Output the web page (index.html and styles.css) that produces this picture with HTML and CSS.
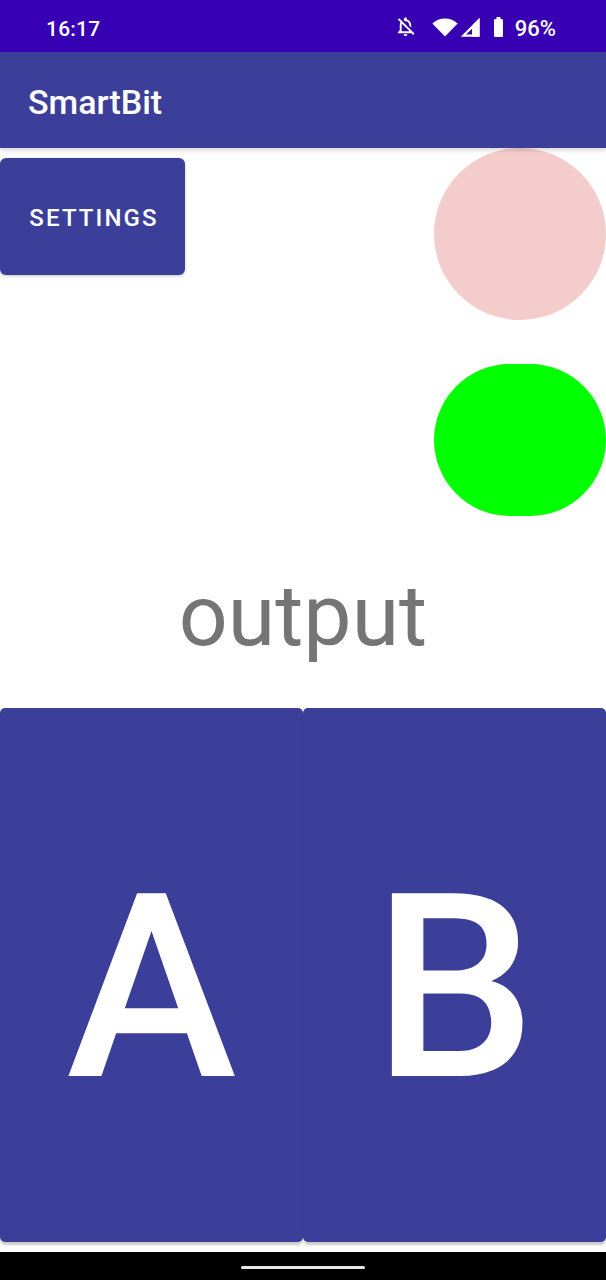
FILE: index.html
```html
<!DOCTYPE html>
<html>
<head>
<meta charset="utf-8">
<link rel="stylesheet" href="styles.css">
</head>
<body>
<div class="screen">
  <div class="status">
    <span class="time">16:17</span>
    <div class="status-icons">
      <svg class="ic-bell" width="23" height="23" viewBox="0 0 24 24"><path fill="#fff" d="M12 22c1.1 0 2-.9 2-2h-4c0 1.1.9 2 2 2zm0-15.5c2.49 0 4 2.02 4 4.5v.1l2 2V11c0-3.070-1.64-5.64-4.5-6.32V4c0-.83-.67-1.5-1.5-1.5s-1.5.67-1.5 1.5v.68c-.24.06-.47.15-.69.23l1.64 1.64c.18-.02.36-.05.55-.05zM5.41 3.35L4 4.76l2.81 2.81C6.29 8.57 6 9.73 6 11v5l-2 2v1h14.24l1.74 1.74 1.41-1.41L5.41 3.35zM16 17H8v-6c0-.68.12-1.32.34-1.9L16 16.76V17z"/></svg>
      <svg class="ic-wifi" width="26" height="19" viewBox="0 0 26 19"><path fill="#fff" d="M13 18.5L0.3 5.6C3.7 2.3 8.2 0.4 13 0.4s9.3 1.9 12.7 5.2z"/></svg>
      <svg class="ic-signal" width="20" height="19" viewBox="0 0 20 19"><path fill="none" stroke="#fff" stroke-width="2.2" stroke-linejoin="miter" d="M18.5 2.6V17.7H3.3z"/><path fill="#fff" d="M19.5 0V18.8H12V7.5z"/></svg>
      <svg class="ic-batt" width="9" height="20" viewBox="0 0 9 20"><path fill="#fff" d="M2.5 0h4v2h1.2c.7 0 1.3.6 1.3 1.3v15.4c0 .7-.6 1.3-1.3 1.3H1.3C.6 20 0 19.4 0 18.7V3.3C0 2.6.6 2 1.3 2h1.2z"/></svg>
      <span class="pct">96%</span>
    </div>
  </div>
  <div class="appbar"><span class="title">SmartBit</span></div>
  <div class="content">
    <div class="top-row">
      <div class="btn-settings">SETTINGS</div>
      <div class="dot-pink"></div>
    </div>
    <div class="green-row">
      <div class="dot-green"></div>
    </div>
    <div class="output">output</div>
    <div class="pad-row">
      <div class="pad">A</div>
      <div class="pad">B</div>
    </div>
  </div>
  <div class="navbar"><div class="handle"></div></div>
</div>
</body>
</html>
```
FILE: styles.css
```css
* { box-sizing: border-box; }
html, body { margin: 0; padding: 0; background: #fff; }
body { font-family: Roboto, "Noto Sans", sans-serif; }
.screen { width: 606px; height: 1280px; display: flex; flex-direction: column; overflow: hidden; }

.status {
  height: 52px; flex: none; background: #3700B3; color: #fff;
  display: flex; align-items: center; justify-content: space-between;
  padding: 0 50px 0 46px;
}
.time { font-size: 21px; font-weight: 500; padding-top: 5px; letter-spacing: 0.2px; }
.status-icons { display: flex; align-items: center; height: 52px; }
.ic-bell { margin-right: 15px; margin-top: 1px; }
.ic-wifi { margin-right: 2px; margin-top: 2px; }
.ic-signal { margin-right: 14px; margin-top: 2px; }
.ic-batt { margin-right: 12px; margin-top: 2px; }
.pct { font-size: 22px; font-weight: 500; padding-top: 5px; }

.appbar {
  height: 96px; flex: none; background: #3C3F99; color: #fff;
  display: flex; align-items: center; padding-left: 28px;
  box-shadow: 0 2px 5px rgba(0,0,0,0.18); position: relative; z-index: 2;
}
.title { font-size: 34px; font-weight: 500; padding-top: 3px; }

.content { flex: 1; display: flex; flex-direction: column; }
.top-row { display: flex; justify-content: space-between; align-items: flex-start; }
.btn-settings {
  margin-top: 10px; width: 185px; height: 117px; background: #3C3F99; color: #fff;
  border-radius: 6px; display: flex; align-items: center; justify-content: center;
  font-size: 24px; font-weight: 500; letter-spacing: 2.1px; line-height: 1; padding: 2px 0 0 3px;
  box-shadow: 0 1px 3px rgba(0,0,0,0.25);
}
.dot-pink { width: 172px; height: 172px; border-radius: 50%; background: #F4CCCC; }
.green-row { display: flex; justify-content: flex-end; margin-top: 44px; }
.dot-green { width: 172px; height: 152px; border-radius: 76px; background: #00FF00; }
.output {
  height: 192px; padding-top: 8px; line-height: 184px; text-align: center;
  font-size: 86px; color: #757575;
}
.pad-row { display: flex; height: 534px; }
.pad {
  flex: 1; background: #3C3F99; color: #fff; border-radius: 5px;
  display: flex; align-items: center; justify-content: center;
  font-size: 257px; font-weight: 500; line-height: 1; padding-top: 26px;
  box-shadow: 0 4px 3px -1px rgba(0,0,0,0.22);
}
.navbar {
  height: 28px; flex: none; background: #000; display: flex; justify-content: center; padding-top: 14px;
}
.handle { width: 124px; height: 3px; border-radius: 2px; background: #e8e8e8; }
```
